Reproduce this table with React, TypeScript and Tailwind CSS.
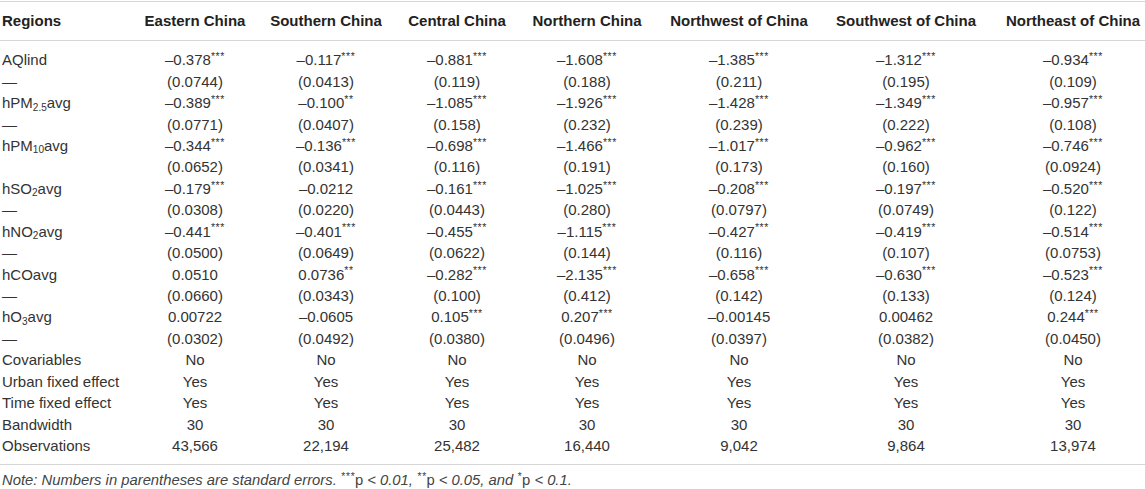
import type { ReactNode } from "react";

const regions = [
  "Eastern China",
  "Southern China",
  "Central China",
  "Northern China",
  "Northwest of China",
  "Southwest of China",
  "Northeast of China",
];

// preflight already nudges <sub>/<sup> off the baseline
const Sub = ({ children }: { children: ReactNode }) => <sub className="text-[10px]">{children}</sub>;

const Stars = ({ n }: { n: string }) => <sup className="text-[10.5px] tracking-[0.6px]">{n}</sup>;

const P = () => <span className="not-italic">p</span>;

const rows: { label: ReactNode; values: string[] }[] = [
  { label: "AQlind", values: ["–0.378***", "–0.117***", "–0.881***", "–1.608***", "–1.385***", "–1.312***", "–0.934***"] },
  { label: "—", values: ["(0.0744)", "(0.0413)", "(0.119)", "(0.188)", "(0.211)", "(0.195)", "(0.109)"] },
  { label: <>hPM<Sub>2.5</Sub>avg</>, values: ["–0.389***", "–0.100**", "–1.085***", "–1.926***", "–1.428***", "–1.349***", "–0.957***"] },
  { label: "—", values: ["(0.0771)", "(0.0407)", "(0.158)", "(0.232)", "(0.239)", "(0.222)", "(0.108)"] },
  { label: <>hPM<Sub>10</Sub>avg</>, values: ["–0.344***", "–0.136***", "–0.698***", "–1.466***", "–1.017***", "–0.962***", "–0.746***"] },
  { label: "", values: ["(0.0652)", "(0.0341)", "(0.116)", "(0.191)", "(0.173)", "(0.160)", "(0.0924)"] },
  { label: <>hSO<Sub>2</Sub>avg</>, values: ["–0.179***", "–0.0212", "–0.161***", "–1.025***", "–0.208***", "–0.197***", "–0.520***"] },
  { label: "—", values: ["(0.0308)", "(0.0220)", "(0.0443)", "(0.280)", "(0.0797)", "(0.0749)", "(0.122)"] },
  { label: <>hNO<Sub>2</Sub>avg</>, values: ["–0.441***", "–0.401***", "–0.455***", "–1.115***", "–0.427***", "–0.419***", "–0.514***"] },
  { label: "—", values: ["(0.0500)", "(0.0649)", "(0.0622)", "(0.144)", "(0.116)", "(0.107)", "(0.0753)"] },
  { label: "hCOavg", values: ["0.0510", "0.0736**", "–0.282***", "–2.135***", "–0.658***", "–0.630***", "–0.523***"] },
  { label: "—", values: ["(0.0660)", "(0.0343)", "(0.100)", "(0.412)", "(0.142)", "(0.133)", "(0.124)"] },
  { label: <>hO<Sub>3</Sub>avg</>, values: ["0.00722", "–0.0605", "0.105***", "0.207***", "–0.00145", "0.00462", "0.244***"] },
  { label: "—", values: ["(0.0302)", "(0.0492)", "(0.0380)", "(0.0496)", "(0.0397)", "(0.0382)", "(0.0450)"] },
  { label: "Covariables", values: Array(7).fill("No") },
  { label: "Urban fixed effect", values: Array(7).fill("Yes") },
  { label: "Time fixed effect", values: Array(7).fill("Yes") },
  { label: "Bandwidth", values: Array(7).fill("30") },
  { label: "Observations", values: ["43,566", "22,194", "25,482", "16,440", "9,042", "9,864", "13,974"] },
];

const gridCols = "grid grid-cols-[130px_130px_132px_130px_130px_174px_160px_159px]";

function Value({ text }: { text: string }) {
  const m = text.match(/^(.*?)(\*+)?$/);
  const num = m ? m[1] : text;
  const stars = m && m[2] ? m[2] : "";
  return (
    <span>
      {num}
      {stars && <Stars n={stars} />}
    </span>
  );
}

export default function App() {
  return (
    <div className="w-[1145px] h-[489px] bg-white pt-px text-[#333] font-['Liberation_Sans',Arial,sans-serif]">
      <div className="border-t border-b border-[#d6d6d6]">
        {/* header */}
        <div className={`${gridCols} h-[39px] items-center border-b border-[#d6d6d6] text-[15px] font-bold text-[#222]`}>
          <div className="pl-[2px]">Regions</div>
          {regions.map((r, i) => (
            <div key={r} className={i === 6 ? "text-center pl-[15px]" : "text-center"}>
              {r}
            </div>
          ))}
        </div>

        {/* body */}
        <div className="pt-[8px] pb-[8px] text-[15px]">
          {rows.map((row, ri) => (
            <div key={ri} className={`${gridCols} h-[21.45px] items-center leading-none`}>
              <div className="pl-[2px] whitespace-nowrap">{row.label}</div>
              {row.values.map((v, ci) => (
                <div key={ci} className={ci === 6 ? "text-center pl-[15px]" : "text-center"}>
                  <Value text={v} />
                </div>
              ))}
            </div>
          ))}
        </div>
      </div>

      <p className="pl-[2px] pt-[8px] text-[14.8px] italic text-[#444] leading-none whitespace-nowrap">
        Note: Numbers in parentheses are standard errors. <Stars n="***" /><P /> &lt; 0.01, <Stars n="**" /><P /> &lt; 0.05, and <Stars n="*" /><P /> &lt; 0.1.
      </p>
    </div>
  );
}
